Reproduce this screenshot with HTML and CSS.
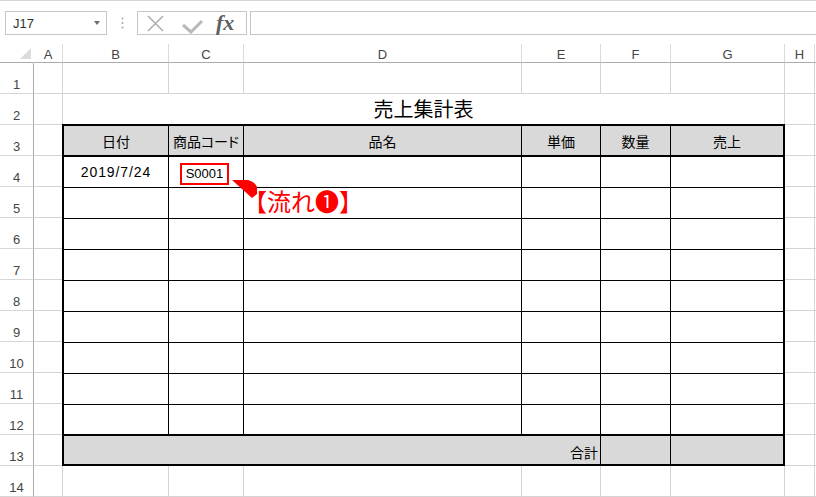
FILE: index.html
```html
<!DOCTYPE html>
<html lang="ja">
<head>
<meta charset="utf-8">
<title>売上集計表</title>
<link rel="stylesheet" href="styles.css">
</head>
<body>
<div class="fbar">
  <div class="namebox"><span>J17</span><span class="nb-arrow"></span></div>
  <div class="fdots"><svg width="3" height="12" viewBox="0 0 3 12"><circle cx="1.5" cy="1.5" r="1"/><circle cx="1.5" cy="6" r="1"/><circle cx="1.5" cy="10.5" r="1"/></svg></div>
  <div class="ficons">
    <svg class="ic-x" width="17" height="17" viewBox="0 0 17 17"><path d="M1 1L16 16M16 1L1 16"/></svg>
    <svg class="ic-ok" width="22" height="15" viewBox="0 0 22 15"><path d="M1 6L9 13L20 2"/></svg>
    <span class="fx">fx</span>
  </div>
  <div class="finput"></div>
</div>

<div class="sheet">
  <div class="ch corner"><svg width="11" height="11" viewBox="0 0 11 11"><polygon points="11,0 11,11 0,11"/></svg></div>
  <div class="ch">A</div><div class="ch">B</div><div class="ch">C</div><div class="ch">D</div><div class="ch">E</div><div class="ch">F</div><div class="ch">G</div><div class="ch">H</div><div class="ch fillh"></div>

  <div class="rh">1</div><div class="c"></div><div class="c"></div><div class="c"></div><div class="c"></div><div class="c"></div><div class="c"></div><div class="c"></div><div class="c"></div><div class="fill"></div>

  <div class="rh">2</div><div class="c"></div><div class="c title">売上集計表</div><div class="c"></div><div class="fill"></div>

  <div class="rh">3</div><div class="c"></div><div class="c"></div><div class="fill"></div>
  <div class="rh">4</div><div class="c"></div><div class="c"></div><div class="fill"></div>
  <div class="rh">5</div><div class="c"></div><div class="c"></div><div class="fill"></div>
  <div class="rh">6</div><div class="c"></div><div class="c"></div><div class="fill"></div>
  <div class="rh">7</div><div class="c"></div><div class="c"></div><div class="fill"></div>
  <div class="rh">8</div><div class="c"></div><div class="c"></div><div class="fill"></div>
  <div class="rh">9</div><div class="c"></div><div class="c"></div><div class="fill"></div>
  <div class="rh">10</div><div class="c"></div><div class="c"></div><div class="fill"></div>
  <div class="rh">11</div><div class="c"></div><div class="c"></div><div class="fill"></div>
  <div class="rh">12</div><div class="c"></div><div class="c"></div><div class="fill"></div>
  <div class="rh">13</div><div class="c"></div><div class="c"></div><div class="fill"></div>

  <div class="rh">14</div><div class="c"></div><div class="c"></div><div class="c"></div><div class="c"></div><div class="c"></div><div class="c"></div><div class="c"></div><div class="c"></div><div class="fill"></div>

  <div class="tbl">
    <div class="t th">日付</div><div class="t th">商品コード</div><div class="t th">品名</div><div class="t th">単価</div><div class="t th">数量</div><div class="t th last">売上</div>

    <div class="t date">2019/7/24</div><div class="t"><span class="mark">S0001</span></div><div class="t"></div><div class="t"></div><div class="t"></div><div class="t last"></div>
    <div class="t"></div><div class="t"></div><div class="t"></div><div class="t"></div><div class="t"></div><div class="t last"></div>
    <div class="t"></div><div class="t"></div><div class="t"></div><div class="t"></div><div class="t"></div><div class="t last"></div>
    <div class="t"></div><div class="t"></div><div class="t"></div><div class="t"></div><div class="t"></div><div class="t last"></div>
    <div class="t"></div><div class="t"></div><div class="t"></div><div class="t"></div><div class="t"></div><div class="t last"></div>
    <div class="t"></div><div class="t"></div><div class="t"></div><div class="t"></div><div class="t"></div><div class="t last"></div>
    <div class="t"></div><div class="t"></div><div class="t"></div><div class="t"></div><div class="t"></div><div class="t last"></div>
    <div class="t"></div><div class="t"></div><div class="t"></div><div class="t"></div><div class="t"></div><div class="t last"></div>
    <div class="t r12"></div><div class="t r12"></div><div class="t r12"></div><div class="t r12"></div><div class="t r12"></div><div class="t r12 last"></div>

    <div class="t tt label">合計</div><div class="t tt"></div><div class="t tt last"></div>
  </div>

  <svg class="callout-ptr" width="32" height="22" viewBox="0 0 32 22"><path d="M4 2L20 2Q27 4 29 9L29 16L24 20Z"/></svg>
  <div class="callout-text">【流れ❶】</div>
</div>
</body>
</html>
```

FILE: styles.css
```css
* {
  box-sizing: border-box;
}

html,
body {
  margin: 0;
  padding: 0;
  background: #fff;
}

body {
  width: 816px;
  height: 497px;
  overflow: hidden;
  font-family: "Liberation Sans", "Noto Sans CJK JP", sans-serif;
  color: #000;
}

/* ---------- formula bar ---------- */
.fbar {
  height: 44px;
  border-top: 1px solid #d5d5d5;
  padding: 10px 0 0 5px;
  display: flex;
  align-items: flex-start;
}

.namebox {
  width: 102px;
  height: 24px;
  border: 1px solid #c6c6c6;
  display: flex;
  align-items: center;
  padding-left: 7px;
  font-size: 13px;
  color: #333;
}

.nb-arrow {
  margin-left: auto;
  margin-right: 6px;
  width: 0;
  height: 0;
  border-left: 3.5px solid transparent;
  border-right: 3.5px solid transparent;
  border-top: 4px solid #6f6f6f;
}

.fdots {
  width: 30px;
  height: 24px;
  display: flex;
  align-items: center;
  justify-content: center;
}

.fdots svg {
  fill: #a8a8a8;
}

.ficons {
  width: 110px;
  height: 24px;
  border: 1px solid #c6c6c6;
  display: flex;
  align-items: center;
}

.ic-x {
  margin-left: 9px;
  fill: none;
  stroke: #b1b1b1;
  stroke-width: 1.7;
}

.ic-ok {
  margin-left: 18px;
  align-self: flex-start;
  margin-top: 7px;
  fill: none;
  stroke: #b8b8b8;
  stroke-width: 3;
}

.fx {
  margin-left: 12px;
  font-family: "Liberation Serif", serif;
  font-style: italic;
  font-weight: bold;
  font-size: 22px;
  line-height: 22px;
  color: #606060;
}

.finput {
  flex: 1;
  height: 24px;
  margin-left: 3px;
  border: 1px solid #c6c6c6;
  border-right: none;
}

/* ---------- sheet grid ---------- */
.sheet {
  position: relative;
  display: grid;
  grid-template-columns: 34px 29px 106px 75px 278px 79px 70px 114px 30px 1fr;
  grid-template-rows: 19px repeat(14, 31px);
  font-size: 13px;
}

.ch {
  border-bottom: 1px solid #ababab;
  border-right: 1px solid #dadada;
  display: flex;
  justify-content: center;
  padding-top: 3px;
  line-height: 15px;
  color: #444;
}

.ch.corner {
  border-right-color: transparent;
  justify-content: flex-end;
  align-items: flex-end;
  padding: 0 2px 3px 0;
}

.corner svg {
  fill: #dcdcdc;
}

.ch.fillh {
  border-right: none;
}

.rh {
  border-right: 1px solid #ababab;
  border-bottom: 1px solid #d6d6d6;
  display: flex;
  justify-content: center;
  align-items: flex-end;
  padding-bottom: 1px;
  line-height: 15px;
  color: #444;
}

.c {
  border-right: 1px solid #d4d4d4;
  border-bottom: 1px solid #d4d4d4;
}

.fill {
  border-bottom: 1px solid #d4d4d4;
}

.title {
  grid-column: span 6;
  display: flex;
  align-items: center;
  justify-content: center;
  font-family: "Noto Sans CJK JP", sans-serif;
  font-size: 20px;
  line-height: 20px;
}

/* ---------- table ---------- */
.tbl {
  grid-column: 3 / 9;
  grid-row: 4 / 15;
  margin: -1px 0 0 -1px;
  border: 2px solid #000;
  background: #fff;
  display: grid;
  grid-template-columns: 105px 75px 278px 79px 70px 112px;
  grid-template-rows: repeat(10, 31px) 28px;
}

.t {
  border-right: 1px solid #000;
  border-bottom: 1px solid #000;
  display: flex;
  align-items: center;
  justify-content: center;
  font-family: "Noto Sans CJK JP", sans-serif;
  font-size: 14px;
  line-height: 18px;
  font-feature-settings: "palt";
}

.t.last {
  border-right: none;
}

.th {
  background: #d9d9d9;
  border-bottom-width: 2px;
}

.t.r12 {
  border-bottom-width: 2px;
}

.tt {
  background: #d9d9d9;
  border-bottom: none;
}

.tt.label {
  grid-column: span 4;
  justify-content: flex-end;
  padding: 3px 2px 0 0;
}

.date {
  font-family: "Liberation Sans", sans-serif;
  font-size: 14px;
  letter-spacing: 0.9px;
}

.mark {
  border: 2px solid #f00;
  padding: 0 4px;
  margin: 3px 3px 0 0;
  font-family: "Liberation Sans", sans-serif;
  font-size: 13px;
  line-height: 18px;
}

/* ---------- callout overlay ---------- */
.callout-ptr {
  position: absolute;
  left: 228px;
  top: 134px;
  fill: #f00;
}

.callout-text {
  position: absolute;
  left: 243px;
  top: 145px;
  font-family: "Noto Sans CJK JP", sans-serif;
  font-size: 24px;
  line-height: 24px;
  font-weight: 400;
  color: #f00;
  white-space: nowrap;
}
```
